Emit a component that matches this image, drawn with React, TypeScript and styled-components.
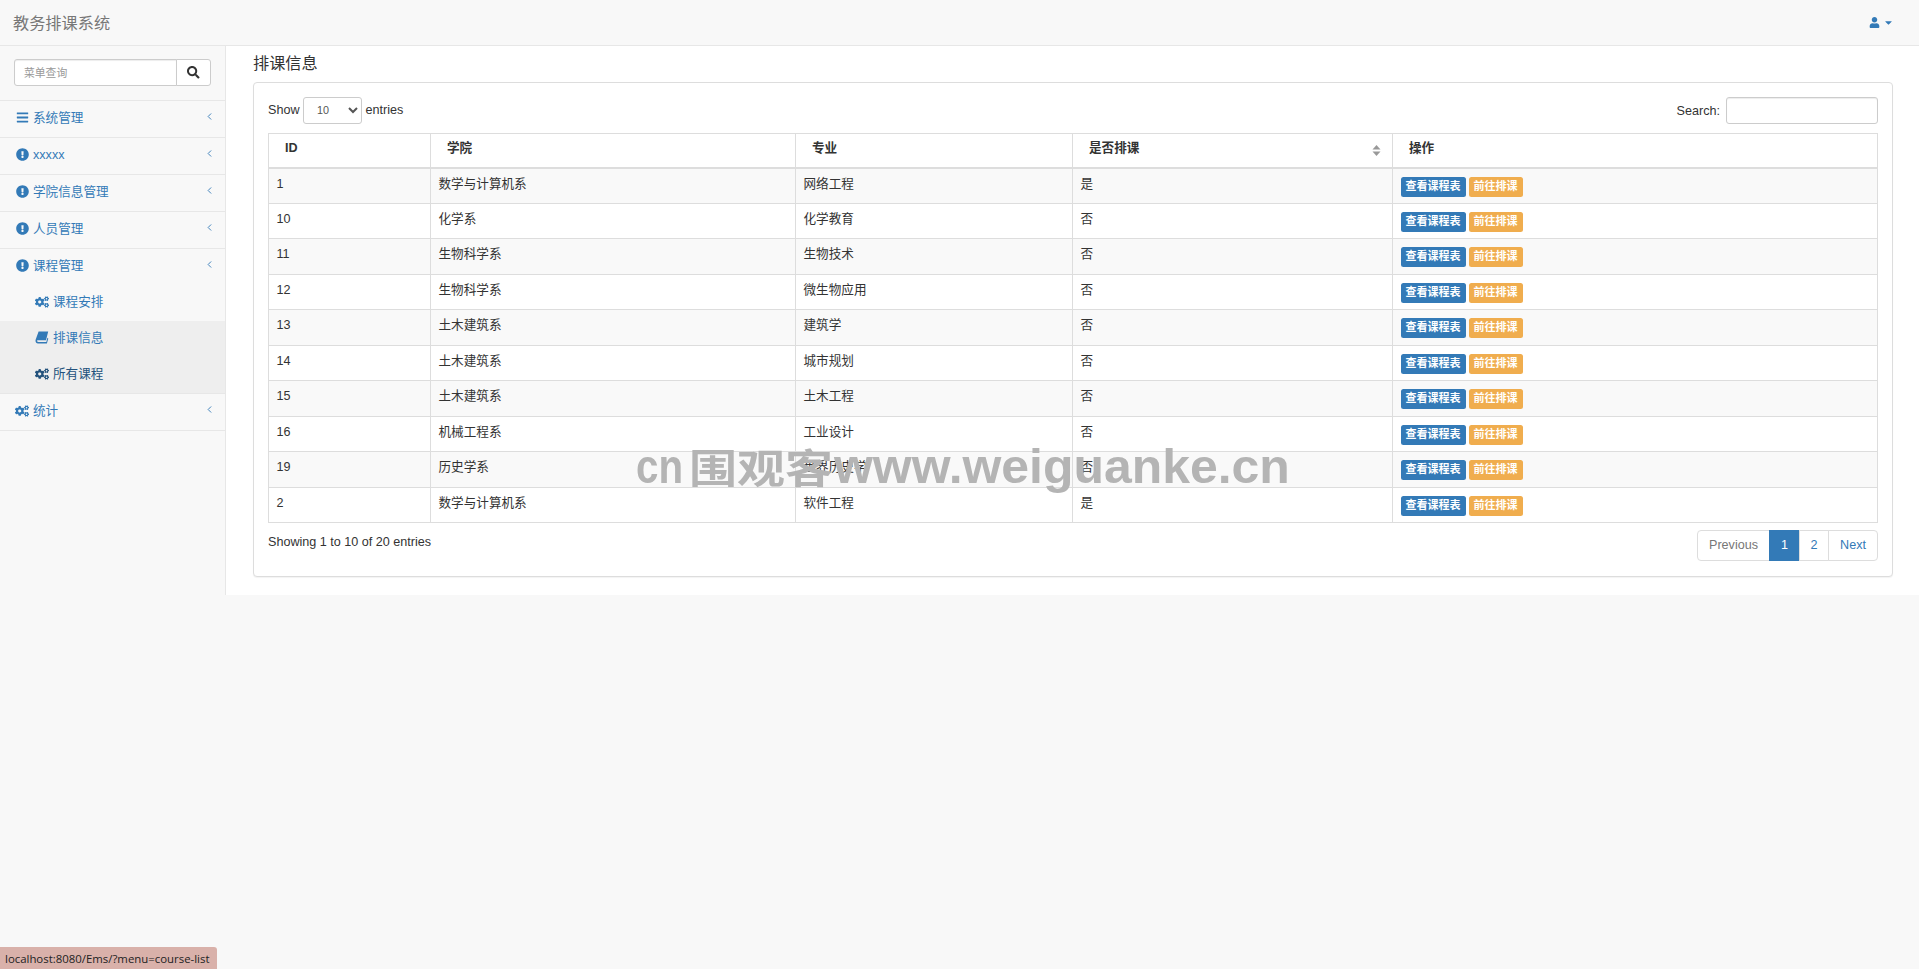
import React from "react";
import styled, { createGlobalStyle } from "styled-components";
import {
  FaBars,
  FaCaretDown,
  FaCogs,
  FaExclamationCircle,
  FaSearch,
  FaUser,
} from "react-icons/fa";
import { ChevronLeft } from "lucide-react";

const GlobalStyle = createGlobalStyle`
  html, body {
    margin: 0;
    padding: 0;
    background-color: #f8f8f8;
  }
  body {
    min-height: 969px;
    font-family: "Liberation Sans", "Noto Sans CJK SC", sans-serif;
    font-size: 12.6px;
    line-height: 18px;
    color: #333;
    overflow: hidden;
  }
  * {
    box-sizing: border-box;
  }
`;

const Navbar = styled.header`
  display: flex;
  align-items: center;
  justify-content: space-between;
  height: 46px;
  padding: 0 25px 0 13px;
  background-color: #f8f8f8;
  border-bottom: 1px solid #e7e7e7;
`;

const Brand = styled.span`
  font-size: 16.2px;
  color: #777;
`;

const UserMenu = styled.span`
  display: flex;
  align-items: center;
  gap: 3px;
  color: #337ab7;
`;

const Wrapper = styled.div`
  display: flex;
  height: 549px;
`;

const Sidebar = styled.nav`
  width: 225px;
  flex-shrink: 0;
`;

const SearchBox = styled.div`
  display: flex;
  height: 55px;
  padding: 13px 14px;
  border-bottom: 1px solid #e7e7e7;
`;

const SearchInput = styled.input`
  width: 164px;
  height: 27px;
  padding: 4px 9px;
  font: inherit;
  font-size: 10.8px;
  color: #555;
  background: #fff;
  border: 1px solid #ccc;
  border-radius: 3px 0 0 3px;
  box-shadow: inset 0 1px 1px rgba(0, 0, 0, 0.075);
  outline: none;
  &::placeholder {
    color: #999;
  }
`;

const SearchButton = styled.button`
  display: flex;
  align-items: center;
  justify-content: center;
  width: 35px;
  height: 27px;
  padding: 0;
  margin-left: -1px;
  color: #333;
  font-size: 12.6px;
  background: #fff;
  border: 1px solid #ccc;
  border-radius: 0 3px 3px 0;
`;

const MenuRow = styled.div`
  display: flex;
  align-items: center;
  height: 37px;
  padding: 0 10px 3px 16px;
  color: #337ab7;
  border-bottom: 1px solid #e7e7e7;
`;

const MenuGroupRow = styled(MenuRow)`
  height: 36px;
  border-bottom: none;
`;

const MenuIcon = styled.span`
  display: flex;
  width: 17px;
  flex-shrink: 0;
  font-size: 13px;
`;

const CogIcon = styled(MenuIcon)`
  margin-left: -1px;
  width: 18px;
  font-size: 14px;
`;

const MenuLabel = styled.span`
  flex: 1;
`;

const Caret = styled.span`
  display: flex;
  margin-bottom: 2px;
  color: #337ab7;
`;

const SubRow = styled.div<{ $shaded?: boolean; $hover?: boolean }>`
  display: flex;
  align-items: center;
  height: 36px;
  padding: 0 0 3px 35px;
  color: ${(p) => (p.$hover ? "#23527c" : "#337ab7")};
  background-color: ${(p) => (p.$shaded ? "#eee" : "transparent")};
`;

const SubList = styled.div`
  border-bottom: 1px solid #e7e7e7;
`;

const SubIcon = styled.span`
  display: flex;
  width: 18px;
  font-size: 14px;
`;

const Content = styled.main`
  flex: 1;
  padding: 8px 27px 0 27px;
  background-color: #fff;
  border-left: 1px solid #e7e7e7;
`;

const PageTitle = styled.h1`
  margin: 0 0 9px;
  font-size: 16.2px;
  font-weight: 400;
  line-height: 19px;
  color: #333;
`;

const Panel = styled.section`
  height: 495px;
  padding: 14px;
  background: #fff;
  border: 1px solid #ddd;
  border-radius: 4px;
  box-shadow: 0 1px 1px rgba(0, 0, 0, 0.05);
`;

const TableTop = styled.div`
  display: flex;
  justify-content: space-between;
  align-items: flex-start;
  height: 36px;
`;

const LengthLabel = styled.label`
  display: flex;
  align-items: center;
  gap: 3.5px;
  height: 26px;
  padding-bottom: 0;
  line-height: 16px;
`;

const LengthSelect = styled.select`
  width: 59px;
  height: 27px;
  padding: 4px 5px 4px 9px;
  font: inherit;
  font-size: 10.8px;
  color: #555;
  background: #fff;
  border: 1px solid #ccc;
  border-radius: 3px;
`;

const FilterLabel = styled.label`
  display: flex;
  align-items: center;
  gap: 6px;
  height: 27px;
  line-height: 16px;
`;

const FilterInput = styled.input`
  width: 152px;
  height: 27px;
  background: #fff;
  border: 1px solid #ccc;
  border-radius: 3px;
  box-shadow: inset 0 1px 1px rgba(0, 0, 0, 0.075);
  outline: none;
`;

const Table = styled.table`
  width: 1609px;
  table-layout: fixed;
  border-collapse: collapse;
  border: 1px solid #ddd;
`;

const HeadCell = styled.th<{ $width: number }>`
  position: relative;
  width: ${(p) => p.$width}px;
  height: 34px;
  padding: 5px 16px 9px;
  font-weight: 700;
  text-align: left;
  vertical-align: middle;
  border: 1px solid #ddd;
  border-bottom: 2px solid #ddd;
`;

const SortIcon = styled.svg`
  position: absolute;
  right: 11px;
  top: 11px;
`;

const Row = styled.tr<{ $odd: boolean }>`
  background-color: ${(p) => (p.$odd ? "#f9f9f9" : "#fff")};
`;

const Cell = styled.td`
  height: 35.5px;
  padding: 6px 7.5px 5px;
  vertical-align: top;
  border: 1px solid #ddd;
`;

const ActionCell = styled(Cell)`
  padding-top: 8px;
  padding-bottom: 0;
`;

const Tag = styled.span<{ $color: string }>`
  display: inline-block;
  height: 20px;
  padding: 0 5px;
  margin-right: 3px;
  font-size: 11px;
  font-weight: 700;
  line-height: 19px;
  color: #fff;
  background-color: ${(p) => p.$color};
  border-radius: 2.5px;
  vertical-align: top;
`;

const TableBottom = styled.div`
  display: flex;
  justify-content: space-between;
  align-items: flex-start;
  margin-top: 7px;
`;

const Info = styled.div`
  padding-top: 3px;
`;

const Pagination = styled.div`
  display: flex;
  height: 31px;
`;

const PageLink = styled.a<{ $active?: boolean; $disabled?: boolean; $width: number }>`
  display: flex;
  align-items: center;
  justify-content: center;
  width: ${(p) => p.$width}px;
  margin-left: -1px;
  padding-bottom: 2px;
  color: ${(p) => (p.$active ? "#fff" : p.$disabled ? "#777" : "#337ab7")};
  background-color: ${(p) => (p.$active ? "#337ab7" : "#fff")};
  border: 1px solid ${(p) => (p.$active ? "#337ab7" : "#ddd")};
  &:first-child {
    border-radius: 4px 0 0 4px;
  }
  &:last-child {
    border-radius: 0 4px 4px 0;
  }
`;

const Watermark = styled.div`
  position: fixed;
  left: 636px;
  top: 431px;
  display: flex;
  align-items: baseline;
  height: 70px;
  color: #b4b4b4;
  white-space: nowrap;
  pointer-events: none;
`;

const MarkCjk = styled.span`
  display: inline-block;
  width: 145px;
  margin-left: 6px;
  font-family: "Noto Sans CJK SC", sans-serif;
  font-size: 40px;
  font-weight: 700;
  line-height: 70px;
  transform: scaleX(1.2);
  transform-origin: left center;
`;

const MarkLatin = styled.span<{ $width: number; $scale: number }>`
  display: inline-block;
  width: ${(p) => p.$width}px;
  font-family: "Liberation Sans", sans-serif;
  font-size: 48px;
  font-weight: 700;
  line-height: 70px;
  transform: scaleX(${(p) => p.$scale});
  transform-origin: left center;
`;

const StatusBar = styled.div`
  position: fixed;
  left: 0;
  bottom: 0;
  width: 217px;
  height: 22px;
  padding: 0 5px;
  font-family: "Open Sans", sans-serif;
  font-size: 11.4px;
  line-height: 23px;
  color: #222;
  white-space: nowrap;
  background-color: #d9b1aa;
  border-top-right-radius: 3px;
`;

const columns = [
  { title: "ID", width: 162 },
  { title: "学院", width: 365 },
  { title: "专业", width: 277 },
  { title: "是否排课", width: 320, sort: true },
  { title: "操作", width: 485 },
];

const rows = [
  ["1", "数学与计算机系", "网络工程", "是"],
  ["10", "化学系", "化学教育", "否"],
  ["11", "生物科学系", "生物技术", "否"],
  ["12", "生物科学系", "微生物应用", "否"],
  ["13", "土木建筑系", "建筑学", "否"],
  ["14", "土木建筑系", "城市规划", "否"],
  ["15", "土木建筑系", "土木工程", "否"],
  ["16", "机械工程系", "工业设计", "否"],
  ["19", "历史学系", "世界历史学", "否"],
  ["2", "数学与计算机系", "软件工程", "是"],
];

const menu = [
  { label: "系统管理", icon: <FaBars /> },
  { label: "xxxxx", icon: <FaExclamationCircle /> },
  { label: "学院信息管理", icon: <FaExclamationCircle /> },
  { label: "人员管理", icon: <FaExclamationCircle /> },
];

// fa-book from the old icon set leans to the right, the current one does not
const SlantedBook = () => (
  <svg width="14" height="13" viewBox="0 0 14 13">
    <path
      d="M3.6 0.5 H13.2 L11 9.2 H2.9 C2.2 9.2 1.9 9.7 2.1 10.2 C2.3 10.8 2.9 11 3.5 11 H11.3 L12.4 6.8 L13.3 7.4 L11.9 12.5 H3 C1.6 12.5 0.4 11.4 0.5 9.8 C0.5 9.4 0.6 9 0.7 8.6 Z"
      fill="currentColor"
    />
  </svg>
);

const MenuCaret = () => (
  <Caret>
    <ChevronLeft size={11} strokeWidth={2} />
  </Caret>
);

const App = () => {
  return (
    <>
      <GlobalStyle />
      <Navbar>
        <Brand>教务排课系统</Brand>
        <UserMenu>
          <FaUser size={11} />
          <FaCaretDown size={11} />
        </UserMenu>
      </Navbar>
      <Wrapper>
        <Sidebar>
          <SearchBox>
            <SearchInput placeholder="菜单查询" />
            <SearchButton>
              <FaSearch />
            </SearchButton>
          </SearchBox>
          {menu.map((item) => (
            <MenuRow key={item.label}>
              <MenuIcon>{item.icon}</MenuIcon>
              <MenuLabel>{item.label}</MenuLabel>
              <MenuCaret />
            </MenuRow>
          ))}
          <MenuGroupRow>
            <MenuIcon>
              <FaExclamationCircle />
            </MenuIcon>
            <MenuLabel>课程管理</MenuLabel>
            <MenuCaret />
          </MenuGroupRow>
          <SubList>
            <SubRow>
              <SubIcon>
                <FaCogs />
              </SubIcon>
              课程安排
            </SubRow>
            <SubRow $shaded>
              <SubIcon>
                <SlantedBook />
              </SubIcon>
              排课信息
            </SubRow>
            <SubRow $shaded $hover>
              <SubIcon>
                <FaCogs />
              </SubIcon>
              所有课程
            </SubRow>
          </SubList>
          <MenuRow>
            <CogIcon>
              <FaCogs />
            </CogIcon>
            <MenuLabel>统计</MenuLabel>
            <MenuCaret />
          </MenuRow>
        </Sidebar>
        <Content>
          <PageTitle>排课信息</PageTitle>
          <Panel>
            <TableTop>
              <LengthLabel>
                Show
                <LengthSelect defaultValue="10">
                  <option value="10">10</option>
                  <option value="25">25</option>
                  <option value="50">50</option>
                </LengthSelect>
                entries
              </LengthLabel>
              <FilterLabel>
                Search:
                <FilterInput />
              </FilterLabel>
            </TableTop>
            <Table>
              <thead>
                <tr>
                  {columns.map((col) => (
                    <HeadCell key={col.title} $width={col.width}>
                      {col.title}
                      {col.sort && (
                        <SortIcon width="9" height="11" viewBox="0 0 9 11">
                          <path d="M4.5 0 L8.5 4.5 H0.5 Z" fill="#999" />
                          <path d="M4.5 11 L8.5 6.5 H0.5 Z" fill="#999" />
                        </SortIcon>
                      )}
                    </HeadCell>
                  ))}
                </tr>
              </thead>
              <tbody>
                {rows.map((row, i) => (
                  <Row key={row[0]} $odd={i % 2 === 0}>
                    {row.map((value, j) => (
                      <Cell key={j}>{value}</Cell>
                    ))}
                    <ActionCell>
                      <Tag $color="#337ab7">查看课程表</Tag>
                      <Tag $color="#f0ad4e">前往排课</Tag>
                    </ActionCell>
                  </Row>
                ))}
              </tbody>
            </Table>
            <TableBottom>
              <Info>Showing 1 to 10 of 20 entries</Info>
              <Pagination>
                <PageLink $disabled $width={73}>
                  Previous
                </PageLink>
                <PageLink $active $width={31}>
                  1
                </PageLink>
                <PageLink $width={30}>2</PageLink>
                <PageLink $width={50}>Next</PageLink>
              </Pagination>
            </TableBottom>
          </Panel>
        </Content>
      </Wrapper>
      <Watermark>
        <MarkLatin $width={47} $scale={0.84}>
          cn
        </MarkLatin>
        <MarkCjk>围观客</MarkCjk>
        <MarkLatin $width={458} $scale={1.04}>
          www.weiguanke.cn
        </MarkLatin>
      </Watermark>
      <StatusBar>localhost:8080/Ems/?menu=course-list</StatusBar>
    </>
  );
};

export default App;
